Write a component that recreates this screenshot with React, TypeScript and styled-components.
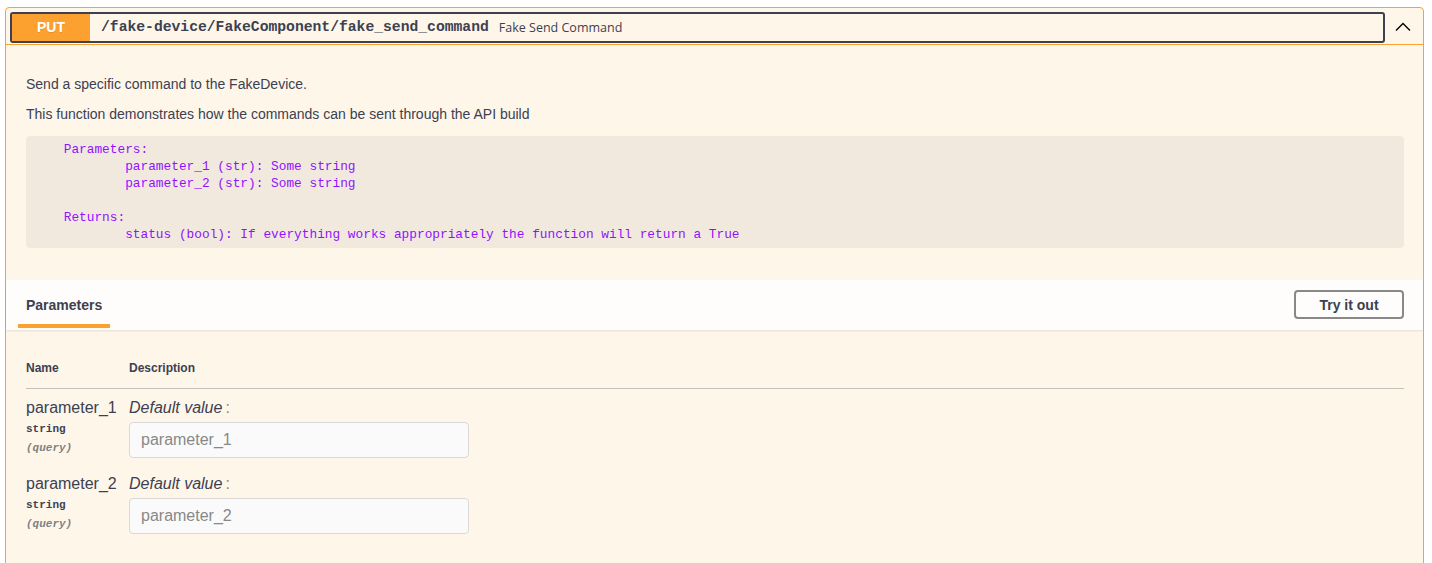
import React from "react";
import styled, { createGlobalStyle } from "styled-components";

const GlobalStyle = createGlobalStyle`
  html, body {
    margin: 0;
    padding: 0;
    background: #fff;
  }
  body {
    font-family: "Liberation Sans", Arial, sans-serif;
    color: #3b4151;
  }
`;

const Page = styled.div`
  padding: 7px 8px 0 5px;
  height: 563px;
  box-sizing: border-box;
  overflow: hidden;
`;

const OpBlock = styled.div`
  border: 1px solid #fca130;
  border-radius: 4px;
  background: #fff6ea;
  height: 600px;
  box-sizing: border-box;
`;

const Summary = styled.div`
  display: flex;
  align-items: center;
  padding: 4px 4px 2px 4px;
  border-bottom: 1px solid #fca130;
  height: 37px;
  box-sizing: border-box;
`;

const SummaryControl = styled.div`
  flex: 1;
  display: flex;
  align-items: center;
  height: 31px;
  border: 2px solid #3b4151;
  border-radius: 3px;
  box-sizing: border-box;
  overflow: hidden;
`;

const Method = styled.span`
  width: 78px;
  height: 100%;
  display: flex;
  align-items: center;
  justify-content: center;
  background: #fca130;
  color: #fff;
  font-weight: 700;
  font-size: 14px;
  text-shadow: 0 1px 0 rgba(0, 0, 0, 0.1);
`;

const Path = styled.span`
  margin-left: 11px;
  font-family: "Liberation Mono", monospace;
  font-weight: 700;
  font-size: 14.7px;
  color: #3b4151;
`;

const SummaryDesc = styled.span`
  margin-left: 10px;
  font-family: "Open Sans", sans-serif;
  font-size: 12.5px;
  color: #3b4151;
`;

const Arrow = styled.button`
  width: 32px;
  height: 31px;
  background: none;
  border: none;
  padding: 0;
  display: flex;
  align-items: center;
  justify-content: center;
  margin-left: 2px;
`;

const Body = styled.div`
  padding: 31px 0 0;
`;

const Description = styled.div`
  padding: 0 19px 0 20px;
  font-size: 14px;
  line-height: 1.2;
  & p {
    margin: 0 0 13px;
  }
`;

const Pre = styled.pre`
  margin: 0;
  padding: 5px 7px;
  background: rgba(0, 0, 0, 0.05);
  border-radius: 4px;
  font-family: "Liberation Mono", monospace;
  font-size: 12.8px;
  line-height: 17px;
  font-weight: 400;
  color: #9012fe;
  white-space: pre;
`;

const SectionHeader = styled.div`
  margin-top: 32px;
  height: 50px;
  display: flex;
  align-items: center;
  justify-content: space-between;
  padding: 0 19px 0 12px;
  background: rgba(255, 255, 255, 0.8);
  box-shadow: 0 1px 2px rgba(0, 0, 0, 0.1);
  box-sizing: border-box;
`;

const Tab = styled.div`
  position: relative;
  height: 100%;
  display: flex;
  align-items: center;
  padding: 0 8px;
  font-size: 14px;
  font-weight: 700;
  color: #3b4151;
  &::after {
    content: "";
    position: absolute;
    left: 0;
    right: 0;
    bottom: 2px;
    height: 4px;
    background: #fca130;
  }
`;

const TryButton = styled.button`
  width: 110px;
  height: 29px;
  border: 2px solid #888;
  border-radius: 4px;
  background: transparent;
  font-family: "Liberation Sans", Arial, sans-serif;
  font-size: 14px;
  font-weight: 700;
  color: #3b4151;
`;

const Table = styled.div`
  padding: 31px 19px 0 20px;
`;

const HeadRow = styled.div`
  display: grid;
  grid-template-columns: 103px 1fr;
  line-height: 14px;
  padding-bottom: 13px;
  font-size: 12px;
  font-weight: 700;
  border-bottom: 1px solid rgba(59, 65, 81, 0.3);
  margin-bottom: 9px;
`;

const ParamRow = styled.div`
  display: grid;
  grid-template-columns: 103px 1fr;
  margin-bottom: 16px;
`;

const ParamName = styled.div`
  font-size: 16px;
  line-height: 19px;
  color: #3b4151;
`;

const ParamType = styled.div`
  font-family: "Liberation Mono", monospace;
  font-size: 11px;
  font-weight: 700;
  line-height: 19px;
  margin-top: 3px;
`;

const ParamIn = styled.div`
  font-family: "Liberation Mono", monospace;
  font-size: 11px;
  font-style: italic;
  font-weight: 700;
  color: #808080;
  line-height: 19px;
`;

const DefaultLabel = styled.div`
  font-size: 16px;
  font-style: italic;
  line-height: 19px;
  color: #3b4151;
  & span {
    font-style: normal;
    color: #888;
    margin-left: 3px;
  }
`;

const Input = styled.input`
  margin-top: 5px;
  width: 340px;
  height: 36px;
  box-sizing: border-box;
  border: 1px solid #d9d9d9;
  border-radius: 4px;
  background: #fafafa;
  padding: 0 11px;
  font-family: "Liberation Sans", Arial, sans-serif;
  font-size: 16px;
  color: #3b4151;
  &::placeholder {
    color: #888;
  }
`;

const params = ["parameter_1", "parameter_2"];

const docstring = `    Parameters:
            parameter_1 (str): Some string
            parameter_2 (str): Some string

    Returns:
            status (bool): If everything works appropriately the function will return a True`;

export default function App() {
  return (
    <>
      <GlobalStyle />
      <Page>
        <OpBlock>
          <Summary>
            <SummaryControl>
              <Method>PUT</Method>
              <Path>/fake-device/FakeComponent/fake_send_command</Path>
              <SummaryDesc>Fake Send Command</SummaryDesc>
            </SummaryControl>
            <Arrow aria-label="collapse">
              <svg width="20" height="20" viewBox="0 0 20 20">
                <path d="M3 13.5 L10 6.5 L17 13.5" fill="none" stroke="#000" strokeWidth="1.4" />
              </svg>
            </Arrow>
          </Summary>
          <Body>
            <Description>
              <p>Send a specific command to the FakeDevice.</p>
              <p>This function demonstrates how the commands can be sent through the API build</p>
              <Pre>{docstring}</Pre>
            </Description>
            <SectionHeader>
              <Tab>Parameters</Tab>
              <TryButton>Try it out</TryButton>
            </SectionHeader>
            <Table>
              <HeadRow>
                <span>Name</span>
                <span>Description</span>
              </HeadRow>
              {params.map((p) => (
                <ParamRow key={p}>
                  <div>
                    <ParamName>{p}</ParamName>
                    <ParamType>string</ParamType>
                    <ParamIn>(query)</ParamIn>
                  </div>
                  <div>
                    <DefaultLabel>
                      Default value<span>:</span>
                    </DefaultLabel>
                    <Input placeholder={p} />
                  </div>
                </ParamRow>
              ))}
            </Table>
          </Body>
        </OpBlock>
      </Page>
    </>
  );
}
